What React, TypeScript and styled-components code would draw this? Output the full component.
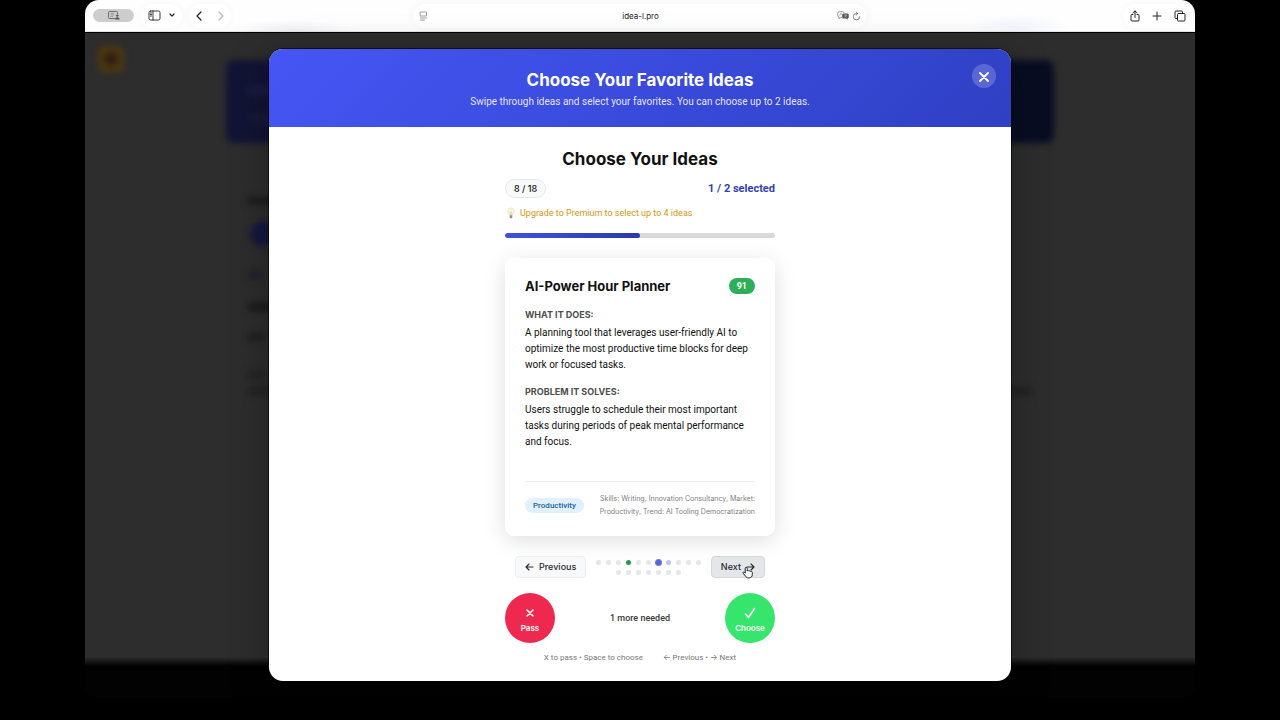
import React, { useState } from "react";
import styled, { createGlobalStyle } from "styled-components";

const display = `Inter, "Liberation Sans", sans-serif`;
const text = `Roboto, Inter, "Liberation Sans", sans-serif`;

const GlobalStyle = createGlobalStyle`
  *, *::before, *::after { box-sizing: border-box; }
  body {
    margin: 0;
    background: #000;
    font-family: ${text};
    color: #111;
  }
  button, input { font-family: inherit; color: inherit; }
  h1, h2, h3, h4, p { margin: 0; }
  svg { display: block; flex: none; }
`;

/* Browser window */

const BrowserWindow = styled.div`
  margin: 0 85px;
  border-radius: 14px 14px 10px 10px;
  overflow: hidden;
  background: #020202;
`;

const Toolbar = styled.header`
  display: grid;
  grid-template-columns: 1fr minmax(0, 454px) 1fr;
  align-items: center;
  height: 32px;
  padding: 0 2px;
  border-bottom: 1px solid #e4e4e4;
  background:
    radial-gradient(ellipse 70px 12px at 204px 32px, rgba(120, 110, 170, 0.1), transparent),
    radial-gradient(ellipse 50px 14px at 935px 28px, rgba(90, 110, 240, 0.08), transparent),
    #fefefe;
`;

const ToolGroup = styled.div<{ $end?: boolean }>`
  display: flex;
  align-items: center;
  gap: 7px;
  padding-left: 6px;
  justify-content: ${(p) => (p.$end ? "flex-end" : "flex-start")};
`;

const Bubble = styled.div<{ $gap: number }>`
  display: flex;
  align-items: center;
  gap: ${(p) => p.$gap}px;
  height: 24px;
  padding: 0 7px;
  border-radius: 12px;
  background: #fff;
  box-shadow: 0 0 8px rgba(0, 0, 0, 0.04);
`;

const ToolButton = styled.button<{ $tone?: string }>`
  display: flex;
  padding: 0;
  border: 0;
  background: none;
  color: ${(p) => p.$tone ?? "#222"};
`;

const ProfileButton = styled.button`
  display: flex;
  align-items: center;
  justify-content: center;
  width: 41px;
  height: 13px;
  padding: 0;
  border: 0;
  border-radius: 7px;
  background: #cdcdcd;
  color: #555;
`;

const AddressBar = styled.div`
  display: flex;
  align-items: center;
  gap: 3px;
  height: 24px;
  padding: 0 6px;
  border-radius: 12px;
  background: #fff;
  box-shadow: 0 0 8px rgba(0, 0, 0, 0.05);
`;

const AddressInput = styled.input`
  flex: 1;
  min-width: 0;
  padding: 0 0 0 16px;
  border: 0;
  background: none;
  outline: 0;
  text-align: center;
  font-family: ${display};
  font-size: 8px;
  line-height: 12px;
  color: #222;
`;

/* Dimmed page behind the dialog */

const Viewport = styled.main`
  display: grid;
  border-top: 1px solid #000;
`;

const Backdrop = styled.div`
  grid-area: 1 / 1;
  display: grid;
  grid-template-columns: 1fr minmax(0, 828px) 1fr;
  overflow: hidden;
  background: linear-gradient(#2d2d2d calc(100% - 40px), #020202 calc(100% - 31px));
`;

const AppBadge = styled.div`
  width: 26px;
  height: 26px;
  margin: 13px 0 0 13px;
  border-radius: 6px;
  background: radial-gradient(circle, #2e1511 3px, #4c390f 9px);
  filter: blur(3px);
`;

const PageColumn = styled.div`
  filter: blur(3px);
`;

const Hero = styled.div`
  height: 83px;
  margin: 27px 0 54px;
  padding: 26px 0;
  border-radius: 8px;
  background: linear-gradient(90deg, #121436, #090d22);
`;

const Smudge = styled.div<{ $width: string; $tone: string; $gap: number }>`
  width: ${(p) => p.$width};
  height: 8px;
  margin: 0 21px ${(p) => p.$gap}px;
  border-radius: 4px;
  background: ${(p) => p.$tone};
`;

const Orb = styled.div`
  width: 26px;
  height: 26px;
  margin: 0 24px 24px;
  border-radius: 50%;
  background: #15173f;
`;

/* Dialog */

const Overlay = styled.div`
  grid-area: 1 / 1;
  position: relative;
  display: flex;
  justify-content: center;
  align-items: flex-start;
  padding: 16px;
`;

const Dialog = styled.section`
  width: 100%;
  max-width: 742px;
  border-radius: 14px;
  overflow: hidden;
  background: #fff;
  box-shadow: 0 0 0 1px rgba(0, 0, 0, 0.6), 0 8px 40px rgba(0, 0, 0, 0.3);
`;

const DialogHeader = styled.header`
  display: grid;
  grid-template-columns: 24px 1fr 24px;
  align-items: start;
  height: 78px;
  padding: 15px;
  background: linear-gradient(135deg, #4556f5, #2f40c4);
  color: #fff;
  text-align: center;
`;

const HeaderText = styled.div`
  grid-column: 2;
  padding-top: 4px;
`;

const DialogTitle = styled.h1`
  font-family: ${display};
  font-size: 17px;
  line-height: 24px;
  font-weight: 700;
`;

const DialogSubtitle = styled.p`
  font-size: 10px;
  line-height: 20px;
  color: rgba(255, 255, 255, 0.88);
`;

const CloseButton = styled.button`
  display: flex;
  align-items: center;
  justify-content: center;
  width: 24px;
  height: 24px;
  padding: 2px 0 0;
  border: 0;
  border-radius: 50%;
  background: rgba(255, 255, 255, 0.2);
  color: #fff;
`;

const Picker = styled.div`
  display: flex;
  flex-direction: column;
  width: 270px;
  margin: 0 auto;
  padding: 20px 0 17px;
`;

const PickerTitle = styled.h2`
  font-family: ${display};
  font-size: 17px;
  line-height: 24px;
  font-weight: 700;
  text-align: center;
`;

const StatusRow = styled.div`
  display: flex;
  align-items: center;
  justify-content: space-between;
  margin-top: 8px;
`;

const CountPill = styled.span`
  padding: 0 8px;
  border: 1px solid #e3e7ec;
  border-radius: 10px;
  background: #f8f9fb;
  font-family: ${display};
  font-size: 9px;
  line-height: 17px;
  font-weight: 500;
`;

const SelectedCount = styled.span`
  font-size: 11px;
  line-height: 17px;
  font-weight: 700;
  color: #2f41b4;
`;

const UpgradeNote = styled.p`
  display: flex;
  align-items: center;
  gap: 3px;
  margin-top: 8px;
  font-size: 9px;
  line-height: 14px;
  color: #d9960f;
`;

const Progress = styled.div`
  height: 5px;
  margin: 13px 0 20px;
  border-radius: 3px;
  overflow: hidden;
  background: #d9d9d9;
`;

const ProgressFill = styled.div`
  height: 100%;
  border-radius: 3px;
  background: linear-gradient(90deg, #4052dc, #2b3aa8);
`;

const Card = styled.article`
  display: flex;
  flex-direction: column;
  min-height: 278px;
  padding: 20px 20px 18px;
  border-radius: 9px;
  background: #fff;
  box-shadow: 0 5px 22px rgba(0, 0, 0, 0.13);
`;

const CardHead = styled.div`
  display: flex;
  align-items: center;
  justify-content: space-between;
  height: 16px;
  margin-bottom: 15px;
`;

const CardTitle = styled.h3`
  font-family: ${display};
  font-size: 13px;
  line-height: 16px;
  font-weight: 700;
`;

const Score = styled.span`
  padding: 0 8px;
  border-radius: 8px;
  background: #2fae59;
  color: #fff;
  font-size: 9px;
  line-height: 16px;
  font-weight: 700;
`;

const FieldLabel = styled.h4`
  margin-bottom: 4px;
  font-family: ${display};
  font-size: 9px;
  line-height: 12px;
  font-weight: 700;
  color: #4d4d4d;
`;

const FieldText = styled.p`
  margin-bottom: 13px;
  font-size: 10px;
  line-height: 16px;
`;

const CardFoot = styled.footer`
  display: flex;
  align-items: center;
  justify-content: space-between;
  margin-top: auto;
  padding-top: 10px;
  border-top: 1px solid #efefef;
`;

const Tag = styled.span`
  padding: 0 8px;
  border-radius: 8px;
  background: #e0f1fb;
  color: #1c629c;
  font-size: 8px;
  line-height: 15px;
  font-weight: 500;
`;

const Meta = styled.p`
  text-align: right;
  white-space: nowrap;
  font-family: ${display};
  font-size: 7px;
  line-height: 13px;
  color: #808080;
`;

const NavRow = styled.nav`
  display: flex;
  align-items: center;
  justify-content: space-between;
  gap: 8px;
  margin-top: 20px;
  padding: 0 10px;
`;

const NavButton = styled.button<{ $active?: boolean }>`
  position: relative;
  display: flex;
  align-items: center;
  gap: 5px;
  height: 22px;
  padding: 0 9px;
  border: 1px solid ${(p) => (p.$active ? "#d3d8dc" : "#eceef1")};
  border-radius: 4px;
  background: ${(p) => (p.$active ? "#e3e7ea" : "#f8f9fa")};
  font-family: ${display};
  font-size: 9px;
  line-height: 20px;
  font-weight: 500;
  color: #2a2a2a;
`;

const Dots = styled.div`
  display: flex;
  flex: 1;
  flex-wrap: wrap;
  justify-content: center;
  gap: 5px;
`;

const dotColors = {
  idle: "#e4e6e9",
  chosen: "#259a50",
  current: "#5563d8",
  near: "#bfc4e8",
};

const Dot = styled.span<{ $kind: keyof typeof dotColors }>`
  width: 5px;
  height: 5px;
  border-radius: 50%;
  background: ${(p) => dotColors[p.$kind]};
  box-shadow: ${(p) => (p.$kind === "current" ? "0 0 0 1px #6f7be0" : "none")};
`;

const Pointer = styled.svg`
  position: absolute;
  right: 10px;
  bottom: -2px;
`;

const ActionRow = styled.div`
  display: flex;
  align-items: center;
  justify-content: space-between;
  margin-top: 15px;
`;

const RoundButton = styled.button<{ $tone: string }>`
  display: flex;
  flex-direction: column;
  align-items: center;
  justify-content: flex-end;
  gap: 3px;
  width: 50px;
  height: 50px;
  padding: 0 0 9px;
  border: 0;
  border-radius: 50%;
  background: ${(p) => p.$tone};
  color: #fff;
  font-family: ${display};
  font-size: 8px;
  line-height: 12px;
  font-weight: 600;
`;

const Needed = styled.span`
  font-size: 9px;
  line-height: 12px;
  font-weight: 500;
  color: #3a3a3a;
`;

const Hints = styled.p`
  display: flex;
  justify-content: center;
  gap: 20px;
  margin-top: 9px;
  font-size: 8px;
  line-height: 12px;
  color: #777;
`;

const Line = ({ w, h, d, sw = 1.2 }: { w: number; h: number; d: string; sw?: number }) => (
  <svg width={w} height={h} viewBox={`0 0 ${w} ${h}`} fill="none" stroke="currentColor" strokeWidth={sw} strokeLinecap="round" strokeLinejoin="round" aria-hidden="true">
    <path d={d} />
  </svg>
);

const Bulb = () => (
  <svg width="12" height="12" viewBox="0 0 12 12" aria-hidden="true">
    <path d="M6 1a3.3 3.3 0 0 0-3.3 3.3C2.7 6 4.3 6.8 4.5 8.2h3C7.7 6.8 9.3 6 9.3 4.300A3.300 3.300 0 0 0 6 1z" fill="#fbf6d8" stroke="#dedac4" strokeWidth=".6" />
    <path d="M5.300 8V5l.7.6.7-.6v3" fill="none" stroke="#e0c679" strokeWidth=".6" />
    <path d="M4.700 8.300h2.600v2L6.700 11.300H5.300l-.6-1z" fill="#8b8f94" />
  </svg>
);

const Hand = () => (
  <Pointer width="13" height="14" viewBox="0 0 13 14" aria-hidden="true">
    <path
      d="M4.200 8.200V3.400a1 1 0 0 1 2 0V6a1 1 0 0 1 1.800.2 1 1 0 0 1 1.700.4 1 1 0 0 1 1.600.8v2.200c0 2-1.300 3.400-3.400 3.400-1.900 0-2.700-.7-3.500-2L2.100 8.200c-.5-1 .7-1.700 1.400-.8z"
      fill="#fff"
      stroke="#222"
      strokeWidth="1"
      strokeLinejoin="round"
    />
  </Pointer>
);

const dotKind = (i: number, current: number): keyof typeof dotColors =>
  i === 3 ? "chosen" : i === current ? "current" : i === current + 1 ? "near" : "idle";

export default function App() {
  const [url, setUrl] = useState("idea-l.pro");
  const total = 18;
  const current = 6;

  return (
    <>
      <GlobalStyle />
      <BrowserWindow>
        <Toolbar>
          <ToolGroup>
            <ProfileButton aria-label="Profile">
              <svg width="12" height="9" viewBox="0 0 12 9" aria-hidden="true">
                <path d="M7 7.500H1.500a1 1 0 0 1-1-1v-5a1 1 0 0 1 1-1h7a1 1 0 0 1 1 1V3" fill="none" stroke="currentColor" strokeWidth=".8" />
                <path d="M2.500 2.500h3.500M2.500 4h3.500M2.500 5.500h2.500" stroke="currentColor" strokeWidth=".4" />
                <circle cx="9.300" cy="4.600" r="1.200" fill="currentColor" />
                <path d="M7 8.500c0-3 4.600-3 4.600 0z" fill="currentColor" />
              </svg>
            </ProfileButton>
            <Bubble $gap={8}>
              <ToolButton aria-label="Show sidebar">
                <Line w={13} h={11} sw={0.9} d="M2.500 1h8a1.500 1.500 0 0 1 1.500 1.500v6a1.500 1.500 0 0 1-1.500 1.500h-8A1.500 1.500 0 0 1 1 8.500v-6A1.500 1.500 0 0 1 2.500 1zM5 1v9M2.500 3h1M2.500 4.500h1M2.500 6h1" />
              </ToolButton>
              <ToolButton aria-label="Tab groups">
                <Line w={6} h={5} d="M1 1l2 2.200L5 1" />
              </ToolButton>
            </Bubble>
            <Bubble $gap={16}>
              <ToolButton aria-label="Back">
                <Line w={6} h={10} d="M5 1L1 5l4 4" />
              </ToolButton>
              <ToolButton aria-label="Forward" $tone="#b8b8b8">
                <Line w={6} h={10} d="M1 1l4 4-4 4" />
              </ToolButton>
            </Bubble>
          </ToolGroup>
          <AddressBar>
            <ToolButton aria-label="Reader" $tone="#8a8a8a">
              <Line w={9} h={10} sw={0.8} d="M1.500 1h6v4h-6zM1.500 7h6M1.500 9h4" />
            </ToolButton>
            <AddressInput aria-label="Address" value={url} onChange={(e) => setUrl(e.target.value)} />
            <ToolButton aria-label="Translate">
              <svg width="12" height="9" viewBox="0 0 12 9" aria-hidden="true">
                <path d="M5 6.300L3.500 6.500 2 7.700V6.200A2.200 2.200 0 0 1 .6 4.200V2.700A2 2 0 0 1 2.600.7h2.800a2 2 0 0 1 2 1.500" fill="none" stroke="#777" strokeWidth=".8" />
                <path d="M2.500 4.800L4 2l1.200 2.200" fill="none" stroke="#888" strokeWidth=".6" />
                <path d="M6.700 2.500h3.600a1.500 1.500 0 0 1 1.500 1.500v2a1.500 1.500 0 0 1-1.200 1.500v1.300L9 7.600H6.700A1.500 1.500 0 0 1 5.200 6V4a1.500 1.500 0 0 1 1.500-1.500z" fill="#555" />
                <path d="M7 4h3M7.300 6.300L9.600 4M9.700 6.300L7.800 4.500" stroke="#ddd" strokeWidth=".5" />
              </svg>
            </ToolButton>
            <ToolButton aria-label="Reload" $tone="#666">
              <Line w={9} h={10} sw={0.8} d="M5.500 2.500H4.500A3.200 3.200 0 1 0 7.700 5.700M4.200 1l1.600 1.500L4.200 4" />
            </ToolButton>
          </AddressBar>
          <ToolGroup $end>
            <Bubble $gap={12}>
              <ToolButton aria-label="Share">
                <Line w={10} h={12} sw={1} d="M3 4.500H2a1 1 0 0 0-1 1V10a1 1 0 0 0 1 1h6a1 1 0 0 0 1-1V5.500a1 1 0 0 0-1-1H7M5 7.500V1M3 2.800L5 1l2 1.800" />
              </ToolButton>
              <ToolButton aria-label="New tab">
                <Line w={10} h={10} sw={1} d="M5 1v8M1 5h8" />
              </ToolButton>
              <ToolButton aria-label="Tab overview">
                <Line w={12} h={12} sw={1} d="M4.500 3.500h5.500a1 1 0 0 1 1 1V10a1 1 0 0 1-1 1H4.500a1 1 0 0 1-1-1V4.500a1 1 0 0 1 1-1zM3.500 8.500H2a1 1 0 0 1-1-1V2a1 1 0 0 1 1-1h5.500a1 1 0 0 1 1 1v1.500" />
              </ToolButton>
            </Bubble>
          </ToolGroup>
        </Toolbar>

        <Viewport>
          <Backdrop aria-hidden="true">
            <AppBadge />
            <PageColumn>
              <Hero>
                <Smudge $width="120px" $tone="#1b1d40" $gap={20} />
                <Smudge $width="160px" $tone="#171939" $gap={0} />
              </Hero>
              <Smudge $width="60px" $tone="#1b1b1b" $gap={16} />
              <Orb />
              <Smudge $width="16px" $tone="#202030" $gap={24} />
              <Smudge $width="60px" $tone="#1a1a1a" $gap={22} />
              <Smudge $width="18px" $tone="#202020" $gap={30} />
              <Smudge $width="18px" $tone="#222222" $gap={8} />
              <Smudge $width="auto" $tone="#222222" $gap={0} />
            </PageColumn>
          </Backdrop>

          <Overlay>
            <Dialog role="dialog" aria-modal="true" aria-labelledby="dialog-title">
              <DialogHeader>
                <HeaderText>
                  <DialogTitle id="dialog-title">Choose Your Favorite Ideas</DialogTitle>
                  <DialogSubtitle>Swipe through ideas and select your favorites. You can choose up to 2 ideas.</DialogSubtitle>
                </HeaderText>
                <CloseButton aria-label="Close">
                  <Line w={10} h={10} sw={1.8} d="M1 1l8 8M9 1L1 9" />
                </CloseButton>
              </DialogHeader>

              <Picker>
                <PickerTitle>Choose Your Ideas</PickerTitle>
                <StatusRow>
                  <CountPill>8 / 18</CountPill>
                  <SelectedCount>1 / 2 selected</SelectedCount>
                </StatusRow>
                <UpgradeNote>
                  <Bulb />
                  Upgrade to Premium to select up to 4 ideas
                </UpgradeNote>
                <Progress role="progressbar" aria-label="Ideas selected" aria-valuemin={0} aria-valuemax={2} aria-valuenow={1}>
                  <ProgressFill style={{ width: `${(1 / 2) * 100}%` }} />
                </Progress>

                <Card>
                  <CardHead>
                    <CardTitle>AI-Power Hour Planner</CardTitle>
                    <Score>91</Score>
                  </CardHead>
                  <FieldLabel>WHAT IT DOES:</FieldLabel>
                  <FieldText>
                    A planning tool that leverages user-friendly AI to optimize the most productive time blocks for deep work or focused tasks.
                  </FieldText>
                  <FieldLabel>PROBLEM IT SOLVES:</FieldLabel>
                  <FieldText>
                    Users struggle to schedule their most important tasks during periods of peak mental performance and focus.
                  </FieldText>
                  <CardFoot>
                    <Tag>Productivity</Tag>
                    <Meta>
                      Skills: Writing, Innovation Consultancy, Market:
                      <br />
                      Productivity, Trend: AI Tooling Democratization
                    </Meta>
                  </CardFoot>
                </Card>

                <NavRow aria-label="Ideas">
                  <NavButton>
                    <Line w={9} h={8} sw={1.1} d="M8 4H1M4 1L1 4l3 3" />
                    Previous
                  </NavButton>
                  <Dots>
                    {Array.from({ length: total }, (_, i) => (
                      <Dot key={i} $kind={dotKind(i, current)} />
                    ))}
                  </Dots>
                  <NavButton $active>
                    Next
                    <Line w={9} h={8} sw={1.1} d="M1 4h7M5 1l3 3-3 3" />
                    <Hand />
                  </NavButton>
                </NavRow>

                <ActionRow>
                  <RoundButton $tone="#ef2850">
                    <Line w={12} h={12} sw={1.6} d="M3 3l6 6M9 3L3 9" />
                    Pass
                  </RoundButton>
                  <Needed>1 more needed</Needed>
                  <RoundButton $tone="#36e56c">
                    <Line w={12} h={12} sw={1.6} d="M1.500 7l3 3.500L10.500 1.500" />
                    Choose
                  </RoundButton>
                </ActionRow>

                <Hints>
                  <span>X to pass • Space to choose</span>
                  <span>← Previous • → Next</span>
                </Hints>
              </Picker>
            </Dialog>
          </Overlay>
        </Viewport>
      </BrowserWindow>
    </>
  );
}
